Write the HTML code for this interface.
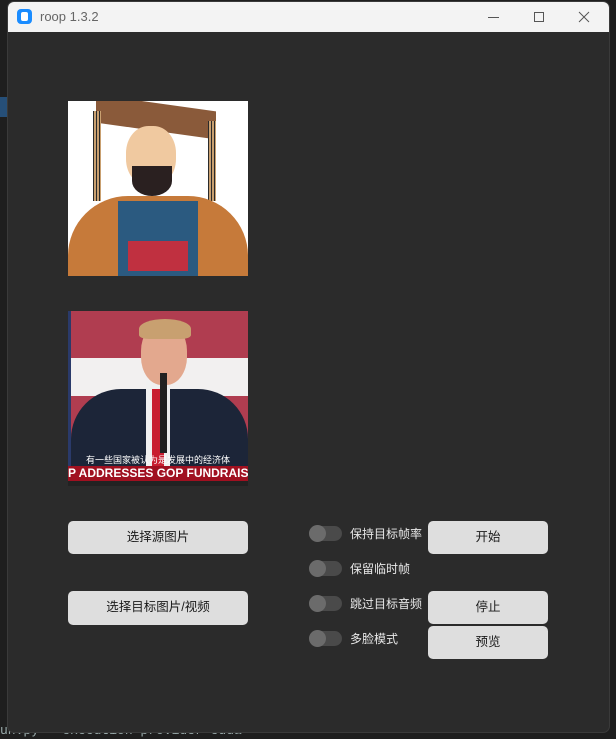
<!DOCTYPE html>
<html><head><meta charset="utf-8"><style>
*{margin:0;padding:0;box-sizing:border-box}
body{width:616px;height:739px;background:#1e1e1e;position:relative;overflow:hidden;font-family:"Liberation Sans","Noto Sans CJK SC",sans-serif}
.abs{position:absolute}
.win{left:7px;top:1px;width:603px;height:732px;background:#2b2b2b;border:1px solid #3a3a3a;border-radius:7px;overflow:hidden}
.title{left:0;top:0;width:603px;height:30px;background:#f3f3f3}
.btn{background:#dedede;border-radius:5px;color:#1a1a1a;font-size:12.5px;text-align:center;line-height:32px}
.sw{width:33px;height:15px;border-radius:8px;background:#4a4a4a}
.sw::before{content:"";position:absolute;left:0;top:-1px;width:17px;height:17px;border-radius:50%;background:#6b6b6b}
.lbl{color:#e8e8e8;font-size:12px}
</style></head><body>
<div class="abs" style="left:0;top:97px;width:8px;height:20px;background:#264f78"></div>
<div class="abs" style="left:0;top:723px;color:#9aa;font-family:'Liberation Mono',monospace;font-size:13px">un.py --execution-provider cuda</div>
<div class="abs win">
 <div class="abs title">
  <div class="abs" style="left:9px;top:7px;width:15px;height:15px;border-radius:4px;background:#1a8cff"></div>
  <div class="abs" style="left:13px;top:10px;width:7px;height:9px;border-radius:2px;background:#fff"></div>
  <div class="abs" style="left:32px;top:7px;font-size:13px;color:#666">roop 1.3.2</div>
  <div class="abs" style="left:480px;top:15px;width:11px;height:1px;background:#555"></div>
  <div class="abs" style="left:526px;top:10px;width:10px;height:10px;border:1px solid #555"></div>
  <svg class="abs" style="left:570px;top:9px" width="12" height="12"><path d="M1 1L11 11M11 1L1 11" stroke="#555" stroke-width="1"/></svg>
 </div>
 <div class="abs" style="left:60px;top:99px;width:180px;height:175px;background:#fff;overflow:hidden">
  <div class="abs" style="left:28px;top:2px;width:120px;height:28px;background:#8a5a3a;transform:skewY(8deg)"></div>
  <div class="abs" style="left:25px;top:10px;width:8px;height:90px;background:repeating-linear-gradient(90deg,#2a2a2a 0 1px,#c9a070 1px 3px)"></div>
  <div class="abs" style="left:140px;top:20px;width:8px;height:80px;background:repeating-linear-gradient(90deg,#2a2a2a 0 1px,#c9a070 1px 3px)"></div>
  <div class="abs" style="left:58px;top:25px;width:50px;height:60px;border-radius:45%;background:#f0c9a0"></div>
  <div class="abs" style="left:64px;top:65px;width:40px;height:30px;border-radius:0 0 50% 50%;background:#2a2020"></div>
  <div class="abs" style="left:0;top:95px;width:180px;height:80px;border-radius:60px 60px 0 0;background:#c67a3a"></div>
  <div class="abs" style="left:50px;top:100px;width:80px;height:75px;background:#2b5a80"></div>
  <div class="abs" style="left:60px;top:140px;width:60px;height:30px;background:#c03040"></div>
 </div>
 <div class="abs" style="left:60px;top:309px;width:180px;height:175px;background:#b03d50;overflow:hidden">
  <div class="abs" style="left:0;top:47px;width:180px;height:38px;background:#f2f0f0"></div>
  <div class="abs" style="left:0;top:0;width:3px;height:175px;background:#2a3a6a"></div>
  <div class="abs" style="left:3px;top:78px;width:177px;height:100px;border-radius:50px 50px 0 0;background:#1c2538"></div>
  <div class="abs" style="left:78px;top:70px;width:24px;height:90px;background:#f0f0f0"></div>
  <div class="abs" style="left:84px;top:78px;width:12px;height:85px;background:#c81e30"></div>
  <div class="abs" style="left:73px;top:12px;width:46px;height:62px;border-radius:45%;background:#e3a88e"></div>
  <div class="abs" style="left:71px;top:8px;width:52px;height:20px;border-radius:50% 50% 20% 20%;background:#c8a070"></div>
  <div class="abs" style="left:92px;top:62px;width:7px;height:80px;background:#222"></div>
  <div class="abs" style="left:0;top:142px;width:180px;text-align:center;font-size:9px;color:#fff">有一些国家被认为是发展中的经济体</div>
  <div class="abs" style="left:0;top:155px;width:180px;height:15px;background:#a01020;color:#fff;font-size:12px;font-weight:bold;line-height:15px;white-space:nowrap">P ADDRESSES GOP FUNDRAISER</div>
  <div class="abs" style="left:0;top:170px;width:180px;height:5px;background:#222"></div>
 </div>
 <div class="abs btn" style="left:60px;top:519px;width:180px;height:33px">选择源图片</div>
 <div class="abs btn" style="left:60px;top:589px;width:180px;height:34px">选择目标图片/视频</div>
 <div class="abs sw" style="left:301px;top:524px"></div>
 <div class="abs sw" style="left:301px;top:559px"></div>
 <div class="abs sw" style="left:301px;top:594px"></div>
 <div class="abs sw" style="left:301px;top:629px"></div>
 <div class="abs lbl" style="left:342px;top:523px">保持目标帧率</div>
 <div class="abs lbl" style="left:342px;top:558px">保留临时帧</div>
 <div class="abs lbl" style="left:342px;top:593px">跳过目标音频</div>
 <div class="abs lbl" style="left:342px;top:628px">多脸模式</div>
 <div class="abs btn" style="left:420px;top:519px;width:120px;height:33px">开始</div>
 <div class="abs btn" style="left:420px;top:589px;width:120px;height:33px">停止</div>
 <div class="abs btn" style="left:420px;top:624px;width:120px;height:33px">预览</div>
</div>
</body></html>
